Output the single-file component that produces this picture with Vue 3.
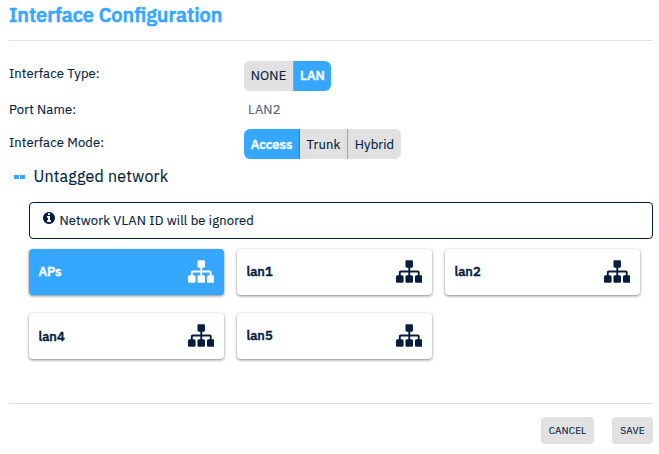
<script setup>
import { ref } from 'vue'

const types = ['NONE', 'LAN']
const modes = ['Access', 'Trunk', 'Hybrid']
const networks = ['APs', 'lan1', 'lan2', 'lan4', 'lan5']
const type = ref('LAN')
const mode = ref('Access')
const network = ref('APs')
</script>

<template>
  <main class="dialog">
    <h1 class="title">Interface Configuration</h1>
    <section class="body">
      <div class="row row-type">
        <span class="label">Interface Type:</span>
        <div class="toggle">
          <button v-for="t in types" :key="t" :class="['option', t.toLowerCase(), { active: t === type }]" @click="type = t">{{ t }}</button>
        </div>
      </div>
      <div class="row row-name">
        <span class="label">Port Name:</span>
        <span class="value">LAN2</span>
      </div>
      <div class="row row-mode">
        <span class="label">Interface Mode:</span>
        <div class="toggle">
          <button v-for="m in modes" :key="m" :class="['option', m.toLowerCase(), { active: m === mode }]" @click="mode = m">{{ m }}</button>
        </div>
      </div>
      <h2 class="subtitle"><span class="dots"><i></i><i></i></span>Untagged network</h2>
      <div class="notice">
        <svg class="info" viewBox="128 128 1536 1536"><path fill="currentColor" d="M1152 1376v-160q0-14-9-23t-23-9h-96v-512q0-14-9-23t-23-9h-320q-14 0-23 9t-9 23v160q0 14 9 23t23 9h96v320h-96q-14 0-23 9t-9 23v160q0 14 9 23t23 9h448q14 0 23-9t9-23zm-128-896v-160q0-14-9-23t-23-9h-192q-14 0-23 9t-9 23v160q0 14 9 23t23 9h192q14 0 23-9t9-23zm640 416q0 209-103 385.5t-279.5 279.5-385.5 103-385.5-103-279.5-279.5-103-385.5 103-385.5 279.5-279.5 385.5-103 385.5 103 279.5 279.5 103 385.5z" /></svg>
        <span>Network VLAN ID will be ignored</span>
      </div>
      <div class="cards">
        <div v-for="n in networks" :key="n" :class="['card', { selected: n === network }]" @click="network = n">
          <span class="name">{{ n }}</span>
          <svg class="sitemap" viewBox="0 128 1792 1536"><path fill="currentColor" d="M1792 1248v320q0 40-28 68t-68 28h-320q-40 0-68-28t-28-68v-320q0-40 28-68t68-28h96v-192h-512v192h96q40 0 68 28t28 68v320q0 40-28 68t-68 28h-320q-40 0-68-28t-28-68v-320q0-40 28-68t68-28h96v-192h-512v192h96q40 0 68 28t28 68v320q0 40-28 68t-68 28h-320q-40 0-68-28t-28-68v-320q0-40 28-68t68-28h96v-192q0-52 38-90t90-38h512v-192h-96q-40 0-68-28t-28-68v-320q0-40 28-68t68-28h320q40 0 68 28t28 68v320q0 40-28 68t-68 28h-96v192h512q52 0 90 38t38 90v192h96q40 0 68 28t28 68z" /></svg>
        </div>
      </div>
    </section>
    <footer class="footer">
      <button class="action">CANCEL</button>
      <button class="action save">SAVE</button>
    </footer>
  </main>
</template>

<style>
body {
  background: #fff;
}
</style>

<style scoped>
.dialog {
  box-sizing: border-box;
  width: 659px;
  height: 454px;
  padding: 0 6px 0 9px;
  overflow: hidden;
  color: #041e3c;
  font: 400 13px/18px "IBM Plex Sans", "Noto Sans", sans-serif;
  letter-spacing: 0.135px;
  -webkit-text-stroke: 0.15px currentColor;
}
button {
  margin: 0;
  border: 0;
  color: inherit;
  font: inherit;
  letter-spacing: inherit;
  cursor: pointer;
}
.title {
  box-sizing: border-box;
  height: 41px;
  margin: 0;
  padding-top: 1px;
  border-bottom: 1px solid #e0e0e0;
  color: #36a7ff;
  font-size: 20px;
  font-weight: 500;
  line-height: 28px;
  letter-spacing: normal;
  -webkit-text-stroke: 0.7px currentColor;
}
.body {
  box-sizing: border-box;
  height: 362px;
  padding-top: 20px;
}
.row {
  display: flex;
  align-items: flex-start;
}
.row-type {
  height: 40px;
}
.row-name {
  height: 28px;
}
.row-mode {
  height: 34px;
}
.label {
  width: 235px;
  padding-top: 4px;
}
.row-name .label,
.row-name .value {
  padding-top: 0;
}
.row-name .value {
  padding-left: 4px;
  color: #53657a;
}
.row-mode .label {
  padding-top: 5px;
}
.toggle {
  display: flex;
  height: 30px;
  border-radius: 6px;
  overflow: hidden;
}
.option {
  box-sizing: border-box;
  padding: 0;
  background: #e1e1e1;
  border-right: 1px solid #a0a0a0;
}
.row-mode .option {
  padding-top: 1px;
}
.option:last-child {
  border-right: 0;
}
.option.active {
  background: #36a7ff;
  border-right-color: #2385d3;
  color: #fff;
  font-weight: 500;
  letter-spacing: normal;
  -webkit-text-stroke: 0.4px currentColor;
}
.none {
  width: 50px;
}
.lan {
  width: 37px;
}
.access {
  width: 56px;
}
.trunk {
  width: 48px;
}
.hybrid {
  width: 53px;
}
.subtitle {
  display: flex;
  align-items: center;
  height: 24px;
  margin: 1px 0 14px;
  padding-left: 5px;
  font-size: 16px;
  font-weight: 400;
  line-height: 24px;
  letter-spacing: 0.19px;
}
.dots {
  display: flex;
  gap: 1px;
  width: 19.5px;
  padding-top: 2px;
}
.dots i {
  width: 5px;
  height: 4px;
  background: #36a7ff;
}
.notice {
  display: flex;
  box-sizing: border-box;
  height: 37px;
  margin-left: 20px;
  padding: 9px 13px 0;
  border: 1px solid #041e3c;
  border-radius: 4px;
}
.info {
  width: 12px;
  height: 12px;
  margin: 0 4.5px 0 0;
}
.cards {
  display: grid;
  grid-template-columns: repeat(3, 195px);
  grid-auto-rows: 46px;
  gap: 18px 13px;
  margin: 10px 0 0 20px;
}
.card {
  display: flex;
  align-items: flex-start;
  justify-content: space-between;
  padding: 11px 10px 0 9.5px;
  border-radius: 4px;
  background: #fff;
  box-shadow: 0 1px 3px rgba(0, 0, 0, 0.5);
}
.card.selected {
  background: #36a7ff;
  color: #fff;
}
.name {
  padding-top: 3px;
  font-weight: 500;
  letter-spacing: normal;
  -webkit-text-stroke: 0.5px currentColor;
}
.card:nth-child(4) .name {
  padding-top: 4px;
}
.sitemap {
  width: 26.5px;
  height: 23px;
}
.footer {
  display: flex;
  justify-content: flex-end;
  gap: 18px;
  padding-top: 13px;
  border-top: 1px solid #e0e0e0;
}
.action {
  width: 53px;
  height: 27px;
  padding: 0;
  border-radius: 4px;
  background: #e1e1e1;
  font-size: 10px;
  line-height: 27px;
}
.action.save {
  width: 41px;
}
</style>
